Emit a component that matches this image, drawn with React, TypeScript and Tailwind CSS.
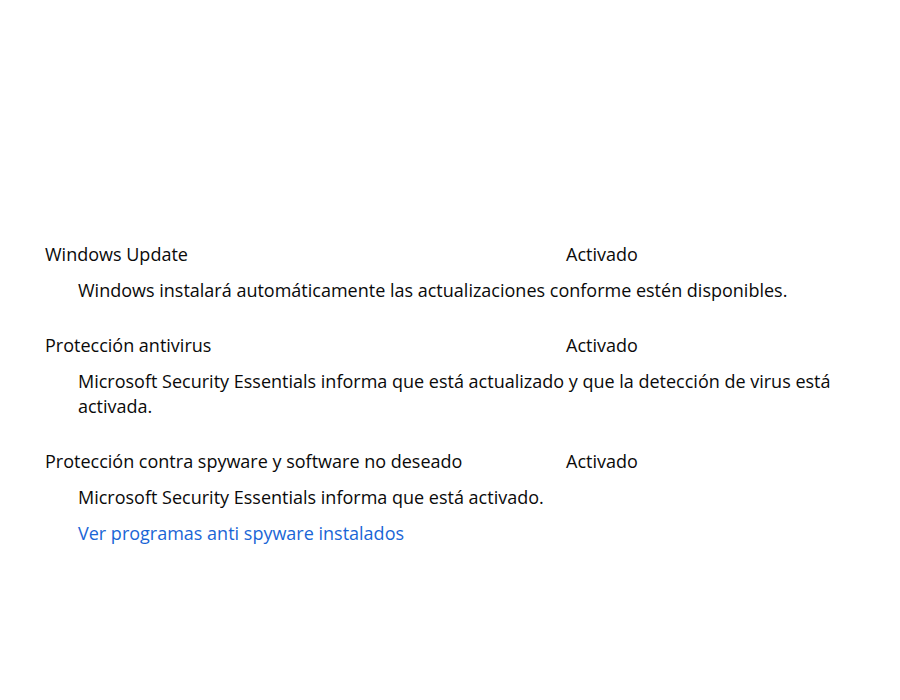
import React from 'react';

type Item = {
  title: string;
  status: string;
  desc: string;
  link?: string;
};

const items: Item[] = [
  {
    title: 'Windows Update',
    status: 'Activado',
    desc: 'Windows instalará automáticamente las actualizaciones conforme estén disponibles.',
  },
  {
    title: 'Protección antivirus',
    status: 'Activado',
    desc: 'Microsoft Security Essentials informa que está actualizado y que la detección de virus está activada.',
  },
  {
    title: 'Protección contra spyware y software no deseado',
    status: 'Activado',
    desc: 'Microsoft Security Essentials informa que está activado.',
    link: 'Ver programas anti spyware instalados',
  },
];

export default function App() {
  return (
    <div
      className="w-[900px] h-[700px] bg-white pt-[242px] pl-[45px] text-[#0a0a0a] text-[18px] leading-[25px]"
      style={{ fontFamily: '"Open Sans", "Noto Sans", sans-serif' }}
    >
      <div className="flex flex-col gap-[30px]">
        {items.map((item) => (
          <div key={item.title} className="flex flex-col gap-[11px]">
            <div className="flex">
              <div className="w-[521px]">{item.title}</div>
              <div>{item.status}</div>
            </div>
            <div className="pl-[33px] w-[810px]">{item.desc}</div>
            {item.link && (
              <a href="#" className="pl-[33px] text-[#1a66d6]">
                {item.link}
              </a>
            )}
          </div>
        ))}
      </div>
    </div>
  );
}
